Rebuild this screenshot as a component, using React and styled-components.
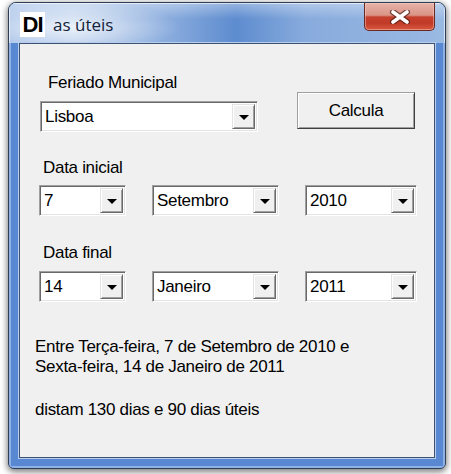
import React from "react";
import styled, { createGlobalStyle } from "styled-components";

const GlobalStyle = createGlobalStyle`
  html, body {
    margin: 0;
    padding: 0;
    background: #ffffff;
  }
  body {
    font-family: "Liberation Sans", Arial, sans-serif;
  }
`;

const Page = styled.div`
  width: 451px;
  height: 474px;
  padding: 2px 0 0 8px;
  box-sizing: border-box;
`;

const Window = styled.div`
  width: 438px;
  height: 467px;
  box-sizing: border-box;
  border: 1px solid #2e3f57;
  border-radius: 8px 8px 6px 6px;
  display: flex;
  flex-direction: column;
  overflow: hidden;
  background: #5686d1;
  box-shadow: 0 2px 6px 1px rgba(0, 0, 0, 0.5);
`;

const TitleBar = styled.div`
  height: 40px;
  flex: none;
  display: flex;
  align-items: flex-start;
  padding-left: 11px;
  padding-right: 10px;
  background:
    radial-gradient(ellipse 110px 26px at 60px 24px, rgba(255, 255, 255, 0.75), rgba(255, 255, 255, 0) 100%),
    linear-gradient(to bottom, rgba(255, 255, 255, 0.35), rgba(255, 255, 255, 0) 40%),
    linear-gradient(to right, #a4bfe7 0%, #b3caea 15%, #86a9dc 38%, #5d8ccf 52%, #88abdd 68%, #9ab9e3 100%);
  box-shadow: inset 1px 1px 0 rgba(255, 255, 255, 0.6), inset -1px 0 0 rgba(255, 255, 255, 0.6);
`;

const AppIcon = styled.div`
  width: 25px;
  height: 25px;
  margin-top: 9px;
  background: #ffffff;
  color: #000000;
  font-family: "Liberation Sans", Arial, sans-serif;
  font-weight: bold;
  font-size: 22px;
  letter-spacing: -1px;
  line-height: 25px;
  text-align: center;
  flex: none;
`;

const Title = styled.div`
  margin-left: 8px;
  margin-top: 11px;
  font-family: "Open Sans", "Noto Sans", sans-serif;
  font-size: 17px;
  line-height: 22px;
  color: #15233a;
  flex: 1;
`;

const CloseButton = styled.div`
  width: 71px;
  height: 28px;
  box-sizing: border-box;
  border: 1px solid #6a2a24;
  border-top: none;
  border-radius: 0 0 5px 5px;
  display: flex;
  align-items: center;
  justify-content: center;
  background: linear-gradient(
    to bottom,
    #e7b3a9 0%,
    #d99486 45%,
    #c6402d 52%,
    #c13b28 75%,
    #d9583f 100%
  );
  box-shadow: inset 0 0 0 1px rgba(255, 210, 200, 0.45);
`;

const Body = styled.div`
  flex: 1;
  padding: 0 10px 10px 10px;
  display: flex;
  background: #5888d2;
  box-shadow: inset 2px 0 0 #8fb1e4, inset -2px 0 0 #8fb1e4, inset 0 -2px 0 #8fb1e4;
`;

const Client = styled.div`
  flex: 1;
  box-sizing: border-box;
  border: 1px solid #3b5272;
  background: #f0f0f0;
  box-shadow: 0 0 0 1px #b9cdec;
  padding: 29px 0 0 20px;
  display: flex;
  flex-direction: column;
  color: #000000;
  font-size: 17px;
  letter-spacing: -0.3px;
`;

const TopRow = styled.div`
  display: flex;
  align-items: flex-end;
`;

const Field = styled.div`
  display: flex;
  flex-direction: column;
  gap: ${(p) => p.$gap || 8}px;
`;

const Label = styled.div`
  line-height: 20px;
  padding-left: ${(p) => p.$indent || 0}px;
`;

const Combo = styled.div`
  width: ${(p) => p.$w}px;
  height: ${(p) => p.$h || 31}px;
  box-sizing: border-box;
  border: 1px solid;
  border-color: #a0a0a0 #ffffff #ffffff #a0a0a0;
  box-shadow: inset 1px 1px 0 #696969, inset -1px -1px 0 #e3e3e3;
  background: #ffffff;
  display: flex;
  align-items: stretch;
  padding: 2px;
  flex: none;
`;

const ComboText = styled.div`
  flex: 1;
  padding-left: 2px;
  display: flex;
  align-items: center;
  line-height: 20px;
`;

const ArrowButton = styled.div`
  width: 23px;
  box-sizing: border-box;
  border: 1px solid;
  border-color: #e3e3e3 #696969 #696969 #e3e3e3;
  box-shadow: inset 1px 1px 0 #ffffff, inset -1px -1px 0 #a0a0a0;
  background: #f0f0f0;
  display: flex;
  align-items: center;
  justify-content: center;
  &::after {
    content: "";
    width: 0;
    height: 0;
    margin-top: 2px;
    border-left: 5px solid transparent;
    border-right: 5px solid transparent;
    border-top: 5px solid #000000;
  }
`;

const Button = styled.div`
  width: 118px;
  height: 37px;
  box-sizing: border-box;
  margin-left: 39px;
  margin-bottom: 3px;
  border: 1px solid;
  border-color: #a0a0a0 #404040 #404040 #a0a0a0;
  box-shadow: inset 1px 1px 0 #ffffff, inset -1px -1px 0 #a0a0a0;
  background: #f0f0f0;
  display: flex;
  align-items: center;
  justify-content: center;
  line-height: 20px;
`;

const DateRow = styled.div`
  display: flex;
  gap: 26px;
  margin-left: -1px;
`;

const Section = styled.div`
  margin-top: ${(p) => p.$top}px;
`;

const Result = styled.div`
  margin-top: 35px;
  margin-left: -5px;
  line-height: 20px;
`;

const Spacer = styled.div`
  height: 23px;
`;

function Select({ value, width, height }) {
  return (
    <Combo $w={width} $h={height}>
      <ComboText>{value}</ComboText>
      <ArrowButton />
    </Combo>
  );
}

function CloseIcon() {
  return (
    <svg width="22" height="14" viewBox="0 0 22 14">
      <path d="M4 2 L18 12 M18 2 L4 12" stroke="#4a1a16" strokeWidth="6" strokeLinecap="round" opacity="0.7" />
      <path d="M4 2 L18 12 M18 2 L4 12" stroke="#ffffff" strokeWidth="3.6" strokeLinecap="round" />
    </svg>
  );
}

export default function App() {
  return (
    <Page>
      <GlobalStyle />
      <Window>
        <TitleBar>
          <AppIcon>DI</AppIcon>
          <Title>as úteis</Title>
          <CloseButton>
            <CloseIcon />
          </CloseButton>
        </TitleBar>
        <Body>
          <Client>
            <TopRow>
              <Field>
                <Label $indent={8}>Feriado Municipal</Label>
                <Select value="Lisboa" width={218} height={31} />
              </Field>
              <Button>Calcula</Button>
            </TopRow>

            <Section $top={26}>
              <Field $gap={7}>
                <Label $indent={3}>Data inicial</Label>
                <DateRow>
                  <Select value="7" width={87} />
                  <Select value="Setembro" width={127} />
                  <Select value="2010" width={112} />
                </DateRow>
              </Field>
            </Section>

            <Section $top={27}>
              <Field $gap={8}>
                <Label $indent={3}>Data final</Label>
                <DateRow>
                  <Select value="14" width={87} />
                  <Select value="Janeiro" width={127} />
                  <Select value="2011" width={112} />
                </DateRow>
              </Field>
            </Section>

            <Result>
              Entre Terça-feira, 7 de Setembro de 2010 e
              <br />
              Sexta-feira, 14 de Janeiro de 2011
              <Spacer />
              distam 130 dias e 90 dias úteis
            </Result>
          </Client>
        </Body>
      </Window>
    </Page>
  );
}
